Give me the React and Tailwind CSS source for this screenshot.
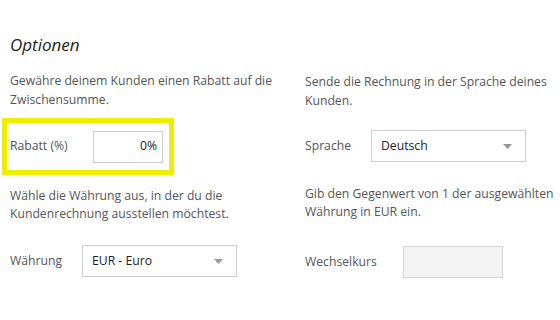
import React from "react";

function Caret() {
  return (
    <svg width="9" height="5" viewBox="0 0 9 5" className="shrink-0">
      <path d="M0 0 L9 0 L4.5 5 Z" fill="#999" />
    </svg>
  );
}

function Select({ value }) {
  return (
    <div className="flex h-[32px] w-[155px] items-center justify-between border border-[#cfcfcf] bg-white pl-[9px] pr-[13px] text-[#222]">
      <span>{value}</span>
      <Caret />
    </div>
  );
}

export default function App() {
  return (
    <div
      className="h-[320px] w-[560px] overflow-hidden bg-white text-[12.2px] text-[#555]"
      style={{ fontFamily: '"Open Sans", sans-serif' }}
    >
      <h2 className="ml-[10px] pt-[34px] text-[17px] leading-[22px] italic text-[#222]">
        Optionen
      </h2>

      <div className="mt-[15px] grid grid-cols-[305px_1fr] whitespace-nowrap">
        <div>
          <p className="ml-[10px] leading-[19px]">
            Gewähre deinem Kunden einen Rabatt auf die
            <br />
            Zwischensumme.
          </p>
          <div className="ml-[2px] mt-[9px] flex h-[57px] w-[172px] items-center border-[5px] border-[#eeee00] pl-[3px]">
            <span className="w-[83px]">Rabatt (%)</span>
            <div className="flex h-[32px] w-[70px] items-center justify-end border border-[#cfcfcf] bg-white pr-[5px] text-[#222]">
              0%
            </div>
          </div>
          <p className="ml-[10px] mt-[12px] leading-[18px]">
            Wähle die Währung aus, in der du die
            <br />
            Kundenrechnung ausstellen möchtest.
          </p>
          <div className="ml-[10px] mt-[22px] flex items-center">
            <span className="w-[72px]">Währung</span>
            <Select value="EUR - Euro" />
          </div>
        </div>

        <div>
          <p className="mt-[1px] leading-[19px]">
            Sende die Rechnung in der Sprache deines
            <br />
            Kunden.
          </p>
          <div className="mt-[20px] flex items-center">
            <span className="w-[66px]">Sprache</span>
            <Select value="Deutsch" />
          </div>
          <p className="mt-[23px] leading-[18px]">
            Gib den Gegenwert von 1 der ausgewählten
            <br />
            Währung in EUR ein.
          </p>
          <div className="mt-[25px] flex items-center">
            <span className="w-[98px]">Wechselkurs</span>
            <div className="h-[32px] w-[100px] border border-[#d6d6d6] bg-[#f3f3f3]" />
          </div>
        </div>
      </div>
    </div>
  );
}
